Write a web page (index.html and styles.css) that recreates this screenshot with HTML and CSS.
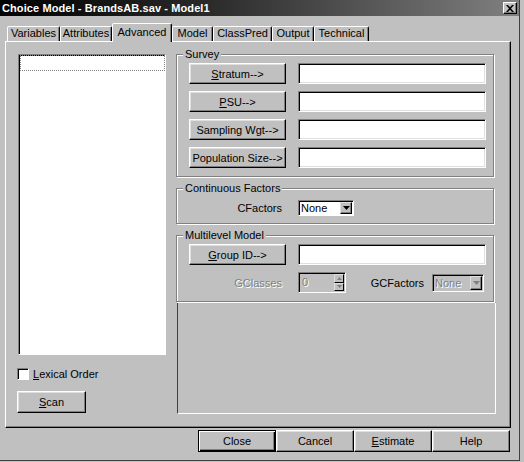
FILE: index.html
```html
<!DOCTYPE html>
<html lang="en">
<head>
  <meta charset="UTF-8" />
  <title>Choice Model - BrandsAB.sav - Model1</title>
  <link rel="stylesheet" href="styles.css">
</head>
<body>
  <div class="window">
    <div class="titlebar">
      <span class="title">Choice Model - BrandsAB.sav - Model1</span>
      <span class="close-btn">
        <svg width="8" height="7" viewBox="0 0 8 7"><path d="M0 0h2l2 2.2L6 0h2L5 3.5 8 7H6L4 4.8 2 7H0l3-3.5z" fill="#000"/></svg>
      </span>
    </div>

    <div class="tabs">
      <div class="tab t-variables">Variables</div>
      <div class="tab t-attributes">Attributes</div>
      <div class="tab t-advanced active">Advanced</div>
      <div class="tab t-model">Model</div>
      <div class="tab t-classpred">ClassPred</div>
      <div class="tab t-output">Output</div>
      <div class="tab t-technical">Technical</div>
    </div>

    <div class="panel">
      <div class="left-col">
        <div class="listbox"><div class="focus-row"></div></div>
        <div class="check">
          <span class="check-box"></span>
          <span><u>L</u>exical Order</span>
        </div>
        <button class="btn btn-scan"><u>S</u>can</button>
      </div>

      <div class="right-col">
        <div class="group group-survey">
          <span class="legend">Survey</span>
          <div class="row"><button class="btn btn-var"><u>S</u>tratum--&gt;</button><div class="field"></div></div>
          <div class="row"><button class="btn btn-var"><u>P</u>SU--&gt;</button><div class="field"></div></div>
          <div class="row"><button class="btn btn-var">Sampling Wgt--&gt;</button><div class="field"></div></div>
          <div class="row"><button class="btn btn-var">Population Size--&gt;</button><div class="field"></div></div>
        </div>

        <div class="group group-cont">
          <span class="legend">Continuous Factors</span>
          <div class="row">
            <span class="lbl">CFactors</span>
            <div class="combo combo-cf">
              <span class="combo-text">None</span>
              <span class="combo-arrow"><svg width="7" height="4" viewBox="0 0 7 4"><path d="M0 0h7L3.5 4z" fill="#000"/></svg></span>
            </div>
          </div>
        </div>

        <div class="group group-multi">
          <span class="legend">Multilevel Model</span>
          <div class="row"><button class="btn btn-var"><u>G</u>roup ID--&gt;</button><div class="field"></div></div>
          <div class="row">
            <span class="lbl disabled">GClasses</span>
            <div class="spinner">
              <span class="spin-text disabled">0</span>
              <span class="spin-btns">
                <span class="spin-btn"><svg width="5" height="3" viewBox="0 0 5 3"><path d="M0 3h5L2.5 0z" fill="#808080"/></svg></span>
                <span class="spin-btn"><svg width="5" height="3" viewBox="0 0 5 3"><path d="M0 0h5L2.5 3z" fill="#808080"/></svg></span>
              </span>
            </div>
            <span class="lbl lbl-gcf">GCFactors</span>
            <div class="combo combo-gcf">
              <span class="combo-text disabled">None</span>
              <span class="combo-arrow"><svg width="7" height="4" viewBox="0 0 7 4"><path d="M0 0h7L3.5 4z" fill="#808080"/></svg></span>
            </div>
          </div>
        </div>

        <div class="sunken-area"></div>
      </div>
    </div>

    <div class="actions">
      <button class="btn btn-action default">Close</button>
      <button class="btn btn-action">Cancel</button>
      <button class="btn btn-action"><u>E</u>stimate</button>
      <button class="btn btn-action">Help</button>
    </div>
  </div>
</body>
</html>
```

FILE: styles.css
```css
:root {
  --face:#c0c0c0;--light:#dfdfdf;--shadow:#808080;--dark:#000;--gray-text:#808080;
}
* {margin:0;padding:0;box-sizing:border-box}
body {
  background:var(--face);width:524px;height:462px;overflow:hidden;
  font-family:"Liberation Sans", Arial, sans-serif;font-size:11px;color:#000;
}
u {text-decoration:underline;text-underline-offset:1px}

.window {
  width:520px;height:461px;background:var(--face);
  border-right:1px solid #404040;border-bottom:1px solid #404040;
}

/* title bar */
.titlebar {
  height:16px;display:flex;align-items:center;justify-content:space-between;padding:0 2px 0 2px;
  background:linear-gradient(90deg,#000 0%,#2a2a2a 40%,#808080 100%);
}
.title {color:#fff;font-weight:bold;font-size:11px;letter-spacing:.1px}
.close-btn {
  width:14px;height:12px;display:flex;align-items:center;justify-content:center;background:var(--face);
  border:1px solid;border-color:#fff #000 #000 #fff;box-shadow:inset -1px -1px var(--shadow);
}

/* tabs */
.tabs {height:25px;display:flex;align-items:flex-end;padding-left:7px}
.tab {
  height:15px;line-height:13px;text-align:center;background:var(--face);
  border:1px solid;border-bottom:none;border-color:#fff #000 transparent #fff;
  border-radius:2px 2px 0 0;box-shadow:inset -1px 0 var(--shadow);
}
.tab.active {
  height:19px;line-height:14px;padding-top:1px;margin-bottom:-1px;position:relative;z-index:1;
}
.t-variables{width:53px}.t-attributes{width:52px}.t-advanced{width:60px}.t-model{width:41px}
.t-classpred{width:59px}.t-output{width:42px}.t-technical{width:55px}

/* tab body */
.panel {
  margin-left:5px;width:506px;height:387px;display:flex;padding:12px 0 0 12px;
  border:1px solid;border-color:#fff #000 #000 #fff;box-shadow:inset -1px -1px var(--shadow);
}
.left-col {width:148px;display:flex;flex-direction:column}
.listbox {
  height:301px;background:#fff;
  border:1px solid;border-color:var(--shadow) #fff #fff var(--shadow);
  box-shadow:inset 1px 1px #000;
}
.focus-row {height:16px;margin:0 0 0 1px;border:1px dotted #808080}
.check {display:flex;align-items:center;gap:4px;height:14px;margin-top:12px;margin-left:-1px}
.check-box {
  width:12px;height:12px;background:#fff;
  border:1px solid;border-color:var(--shadow) #fff #fff var(--shadow);box-shadow:inset 1px 1px #000;
}

.btn {
  font:inherit;color:#000;background:var(--face);cursor:default;
  border:1px solid;border-color:#fff #000 #000 #fff;
  box-shadow:inset -1px -1px var(--shadow), inset 1px 1px var(--light);
}
.btn-scan {width:69px;height:22px;margin-top:10px;margin-left:-1px}

.right-col {width:318px;margin-left:10px;display:flex;flex-direction:column}

.group {
  position:relative;border:1px solid var(--shadow);
  box-shadow:inset 1px 1px #fff, 1px 1px #fff;
  display:flex;flex-direction:column;gap:7px;padding:8px 7px 0 12px;
}
.legend {position:absolute;top:-7px;left:6px;padding:0 2px;background:var(--face);line-height:13px}
.group-survey {height:123px}
.group-cont {height:36px;margin-top:11px;padding-top:11px}
.group-multi {height:67px;margin-top:11px}

.row {display:flex;align-items:center;min-height:21px}
.group-cont .row {min-height:16px}
.btn-var {width:97px;height:21px}
.field {
  width:188px;height:21px;margin-left:12px;background:#fff;
  border:1px solid;border-color:var(--shadow) #fff #fff var(--shadow);
  box-shadow:inset 1px 1px #000, inset -1px -1px var(--light);
}
.lbl {width:93px;text-align:right}
.lbl.disabled,.disabled {color:var(--gray-text);text-shadow:1px 1px 0 #fff}
.lbl-gcf {width:74px;margin-left:4px;color:#000}

.combo {
  display:flex;align-items:center;margin-left:16px;background:#fff;padding:1px;
  border:1px solid;border-color:var(--shadow) #fff #fff var(--shadow);box-shadow:inset 1px 1px #000;
}
.combo-cf {width:56px;height:16px}
.combo-gcf {width:52px;height:18px;margin-left:8px;background:var(--face)}
.combo-text {flex:1;padding-left:1px;line-height:12px}
.combo-arrow {
  width:12px;height:100%;display:flex;align-items:center;justify-content:center;background:var(--face);
  border:1px solid;border-color:var(--light) #000 #000 var(--light);box-shadow:inset -1px -1px var(--shadow);
}

.spinner {
  width:48px;height:21px;margin-left:16px;display:flex;background:var(--face);padding:1px;
  border:1px solid;border-color:var(--shadow) #fff #fff var(--shadow);box-shadow:inset 1px 1px #000;
}
.spin-text {flex:1;padding-left:2px;line-height:17px}
.spin-btns {width:10px;display:flex;flex-direction:column}
.spin-btn {
  flex:1;display:flex;align-items:center;justify-content:center;background:var(--face);
  border:1px solid;border-color:var(--light) #000 #000 var(--light);
}

.sunken-area {
  width:319px;height:112px;margin-left:1px;margin-right:-2px;
  border:1px solid;border-color:#404040 #fff #fff #404040;
}

/* dialog buttons */
.actions {display:flex;justify-content:flex-end;padding-right:9px;margin-top:2px}
.btn-action {width:78px;height:22px}
.btn-action.default {
  border-color:#000;
  box-shadow:inset 1px 1px #fff, inset -1px -1px #000, inset -2px -2px var(--shadow);
}
```
